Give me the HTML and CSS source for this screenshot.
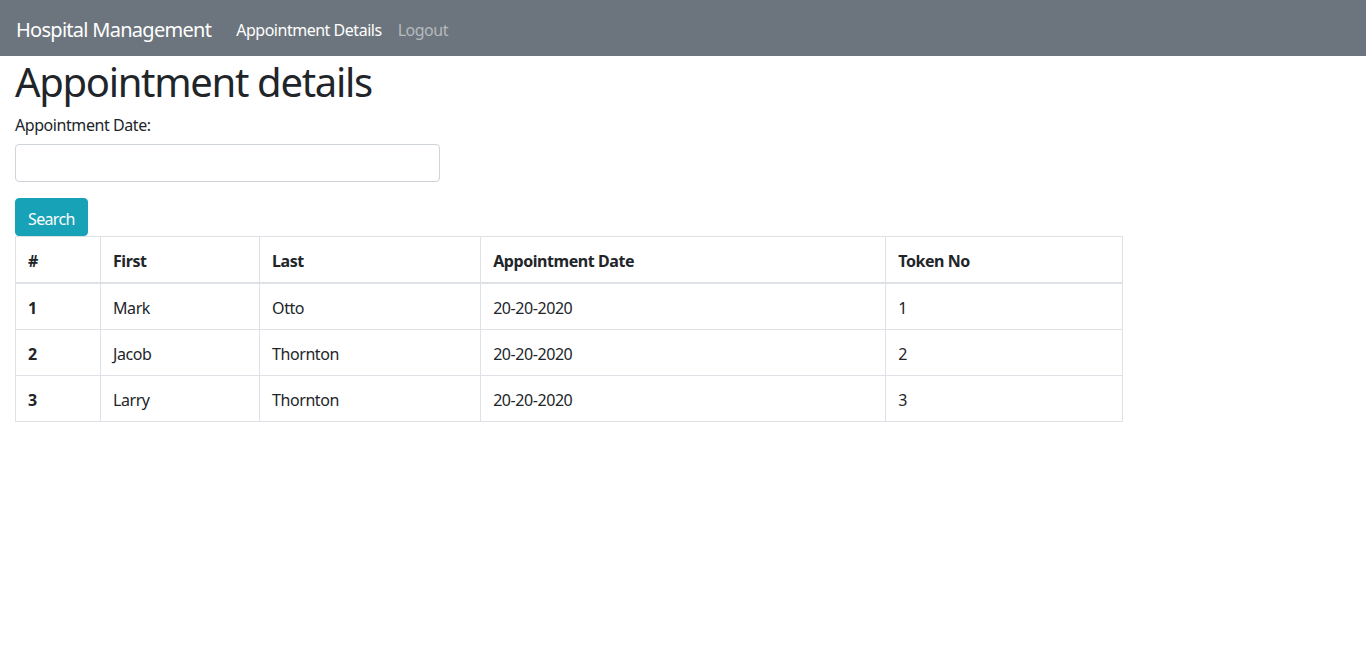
FILE: index.html
```html
<!DOCTYPE html>
<html lang="en">
<head>
<meta charset="utf-8">
<title>Hospital Management</title>
<link rel="stylesheet" href="styles.css">
</head>
<body>
<nav class="navbar">
  <a class="brand" href="#">Hospital Management</a>
  <ul class="nav">
    <li><a class="nav-link active" href="#">Appointment Details</a></li>
    <li><a class="nav-link muted" href="#">Logout</a></li>
  </ul>
</nav>
<main class="container">
  <div class="col">
    <h1 class="title">Appointment details</h1>
    <form class="form">
      <div class="form-group">
        <label class="label" for="date">Appointment Date:</label>
        <input class="input" id="date" type="text">
      </div>
      <button class="btn" type="button">Search</button>
    </form>
    <table class="table">
      <colgroup>
        <col class="c1"><col class="c2"><col class="c3"><col class="c4"><col class="c5">
      </colgroup>
      <thead>
        <tr><th>#</th><th>First</th><th>Last</th><th>Appointment Date</th><th>Token No</th></tr>
      </thead>
      <tbody>
        <tr><th>1</th><td>Mark</td><td>Otto</td><td>20-20-2020</td><td>1</td></tr>
        <tr><th>2</th><td>Jacob</td><td>Thornton</td><td>20-20-2020</td><td>2</td></tr>
        <tr><th>3</th><td>Larry</td><td>Thornton</td><td>20-20-2020</td><td>3</td></tr>
      </tbody>
    </table>
  </div>
</main>
</body>
</html>
```
FILE: styles.css
```css
* { box-sizing: border-box; }
html, body { margin: 0; }
body {
  font-family: "Noto Sans", "Open Sans", sans-serif;
  font-size: 16px;
  line-height: 1.5;
  letter-spacing: -0.027em;
  color: #212529;
  background: #fff;
}
.navbar {
  background: #6c757d;
  height: 56px;
  padding: 10px 16px 6px;
  display: flex;
  align-items: center;
}
.brand {
  color: #fff;
  text-decoration: none;
  font-size: 20px;
  line-height: 30px;
  margin-right: 17px;
  letter-spacing: -0.036em;
}
.nav {
  display: flex;
  list-style: none;
  margin: 0;
  padding: 0;
}
.nav-link {
  display: block;
  padding: 8px;
  text-decoration: none;
  color: #fff;
  letter-spacing: -0.03em;
}
.nav-link.muted { color: rgba(255,255,255,.5); }
.container { padding: 0 15px; }
.col { width: calc((100% + 30px) * 10 / 12 - 30px); }
.title {
  margin: 0 0 8px;
  padding-top: 3px;
  height: 48px;
  font-size: 40px;
  font-weight: 400;
  line-height: 45px;
  letter-spacing: -0.033em;
}
.form-group { margin-bottom: 16px; }
.label { display: block; margin-bottom: 8px; padding-top: 2px; height: 24px; line-height: 22px; }
.input {
  display: block;
  width: 425px;
  height: 38px;
  border: 1px solid #ced4da;
  border-radius: 4px;
  padding: 6px 12px;
  font: inherit;
}
.btn {
  display: block;
  height: 38px;
  padding: 8px 12px 4px;
  background: #17a2b8;
  border: 1px solid #17a2b8;
  border-radius: 4px;
  color: #fff;
  font: inherit;
  line-height: 24px;
  letter-spacing: -0.04em;
}
.table {
  width: 100%;
  border-collapse: collapse;
  table-layout: fixed;
}
.table th, .table td {
  border: 1px solid #dee2e6;
  padding: 14px 12px 10px;
  line-height: 21px;
  text-align: left;
  vertical-align: top;
}
.table thead th { border-bottom: 2px solid #dee2e6; font-weight: 700; }
.table tbody th { font-weight: 700; }
.c1 { width: 85px; }
.c2 { width: 159px; }
.c3 { width: 221px; }
.c4 { width: 405px; }
.c5 { width: 237px; }
```
